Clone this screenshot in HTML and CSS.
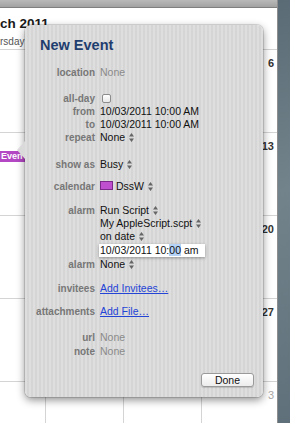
FILE: index.html
```html
<!DOCTYPE html>
<html lang="en">
<head>
    <meta charset="UTF-8">
    <meta name="viewport" content="width=device-width, initial-scale=1.0">
    <title>New Event</title>
    <link rel="stylesheet" href="styles.css">
</head>
<body>
    <div class="screen">
        <div class="calendar">
            <div class="toolbar"></div>
            <div class="month-head">
                <div class="month-title">ch 2011</div>
                <div class="day-name">rsday</div>
            </div>
            <div class="weeks">
                <div class="week">
                    <div class="day"></div>
                    <div class="day"></div>
                    <div class="day"></div>
                    <div class="day"><span class="num">6</span></div>
                </div>
                <div class="week">
                    <div class="day"><span class="chip">Even</span></div>
                    <div class="day"></div>
                    <div class="day"></div>
                    <div class="day"><span class="num">13</span></div>
                </div>
                <div class="week">
                    <div class="day"></div>
                    <div class="day"></div>
                    <div class="day"></div>
                    <div class="day"><span class="num">20</span></div>
                </div>
                <div class="week">
                    <div class="day"></div>
                    <div class="day"></div>
                    <div class="day"></div>
                    <div class="day"><span class="num">27</span></div>
                </div>
                <div class="week">
                    <div class="day"></div>
                    <div class="day"></div>
                    <div class="day"></div>
                    <div class="day"><span class="num next">3</span></div>
                </div>
            </div>
        </div>
        <div class="desktop"></div>
    </div>

    <div class="popover">
        <h1>New Event</h1>

        <div class="row">
            <span class="label">location</span>
            <span class="value muted">None</span>
        </div>

        <div class="row gap-13">
            <span class="label">all-day</span>
            <span class="value"><span class="checkbox"></span></span>
        </div>
        <div class="row">
            <span class="label">from</span>
            <span class="value">10/03/2011 10:00 AM</span>
        </div>
        <div class="row">
            <span class="label">to</span>
            <span class="value">10/03/2011 10:00 AM</span>
        </div>
        <div class="row">
            <span class="label">repeat</span>
            <span class="value">None <svg class="updown" width="5" height="9" viewBox="0 0 5 9"><path d="M2.5 0 5 3.5H0zM0 5.5h5L2.5 9z"/></svg></span>
        </div>

        <div class="row gap-14">
            <span class="label">show as</span>
            <span class="value">Busy <svg class="updown" width="5" height="9" viewBox="0 0 5 9"><path d="M2.5 0 5 3.5H0zM0 5.5h5L2.5 9z"/></svg></span>
        </div>

        <div class="row gap-9">
            <span class="label">calendar</span>
            <span class="value"><span class="swatch"></span>DssW <svg class="updown" width="5" height="9" viewBox="0 0 5 9"><path d="M2.5 0 5 3.5H0zM0 5.5h5L2.5 9z"/></svg></span>
        </div>

        <div class="row gap-11">
            <span class="label">alarm</span>
            <div class="value stack">
                <span>Run Script <svg class="updown" width="5" height="9" viewBox="0 0 5 9"><path d="M2.5 0 5 3.5H0zM0 5.5h5L2.5 9z"/></svg></span>
                <span>My AppleScript.scpt <svg class="updown" width="5" height="9" viewBox="0 0 5 9"><path d="M2.5 0 5 3.5H0zM0 5.5h5L2.5 9z"/></svg></span>
                <span>on date <svg class="updown" width="5" height="9" viewBox="0 0 5 9"><path d="M2.5 0 5 3.5H0zM0 5.5h5L2.5 9z"/></svg></span>
                <span class="date-field">10/03/2011 10:<span class="selected">00</span> am</span>
            </div>
        </div>
        <div class="row gap-1">
            <span class="label">alarm</span>
            <span class="value">None <svg class="updown" width="5" height="9" viewBox="0 0 5 9"><path d="M2.5 0 5 3.5H0zM0 5.5h5L2.5 9z"/></svg></span>
        </div>

        <div class="row gap-11">
            <span class="label">invitees</span>
            <span class="value"><a href="#">Add Invitees…</a></span>
        </div>

        <div class="row gap-10">
            <span class="label">attachments</span>
            <span class="value"><a href="#">Add File…</a></span>
        </div>

        <div class="row gap-13">
            <span class="label">url</span>
            <span class="value muted">None</span>
        </div>
        <div class="row gap-1">
            <span class="label">note</span>
            <span class="value muted">None</span>
        </div>

        <div class="actions">
            <button>Done</button>
        </div>
    </div>
</body>
</html>
```

FILE: styles.css
```css
body {
    margin: 0;
    width: 290px;
    height: 423px;
    overflow: hidden;
    font-family: 'Liberation Sans', Arial, sans-serif;
    background-color: #5f707a;
    position: relative;
}

.screen {
    display: flex;
    height: 423px;
}

.calendar {
    width: 277px;
    background-color: #fff;
    border-right: 1px solid #8e8e8e;
    overflow: hidden;
}

.desktop {
    flex: 1;
    background: linear-gradient(160deg, #5a6b75 0%, #73838c 45%, #5f707a 100%);
}

.toolbar {
    height: 7px;
    background: linear-gradient(#b9b9b9, #a2a2a2);
    border-bottom: 1px solid #7f7f7f;
}

.month-head {
    height: 41px;
}

.month-title {
    font-size: 13.5px;
    font-weight: bold;
    color: #1a1a1a;
    padding-top: 8px;
    line-height: 16px;
    white-space: nowrap;
}

.day-name {
    font-size: 10px;
    color: #555;
    padding-top: 4px;
    line-height: 12px;
    white-space: nowrap;
}

.weeks {
    border-top: 1px solid #d4d4d4;
}

.week {
    display: grid;
    grid-template-columns: 45px 78px 78px 1fr;
    height: 83px;
    border-bottom: 1px solid #d4d4d4;
    box-sizing: border-box;
}

.day {
    border-left: 1px solid #d4d4d4;
    text-align: right;
    padding: 3px 3px 0 0;
}

.day:first-child {
    border-left: none;
    text-align: left;
    padding: 12px 0 0 0;
}

.num {
    font-size: 11px;
    font-weight: bold;
    color: #333;
    line-height: 12px;
}

.num.next {
    color: #a8a8a8;
    font-weight: normal;
}

.chip {
    display: inline-block;
    background-color: #b347c4;
    color: #fff;
    font-size: 9px;
    font-weight: bold;
    line-height: 11px;
    padding: 0 3px 0 1px;
}

.popover {
    position: absolute;
    left: 25px;
    top: 25px;
    width: 238px;
    height: 372px;
    box-sizing: border-box;
    padding: 11px 9px 11px 0;
    border-radius: 6px;
    background: repeating-linear-gradient(90deg, #dedede 0, #dedede 2px, #d5d5d5 2px, #d5d5d5 4px);
    box-shadow: 0 3px 9px rgba(0, 0, 0, 0.45), 0 0 0 1px rgba(0, 0, 0, 0.12);
}

.popover::before {
    content: '';
    position: absolute;
    left: -8px;
    top: 116px;
    width: 8px;
    height: 18px;
    background-color: #dadada;
    clip-path: polygon(100% 0, 0 50%, 100% 100%);
}

h1 {
    margin: 0 0 12px 15px;
    font-size: 14.5px;
    line-height: 18px;
    color: #1f3d6e;
}

.row {
    display: grid;
    grid-template-columns: 70px 1fr;
    column-gap: 5px;
    line-height: 13px;
    font-size: 10.5px;
}

.gap-1 { margin-top: 1px; }
.gap-9 { margin-top: 9px; }
.gap-10 { margin-top: 10px; }
.gap-11 { margin-top: 11px; }
.gap-13 { margin-top: 13px; }
.gap-14 { margin-top: 14px; }

.label {
    text-align: right;
    font-size: 10px;
    font-weight: bold;
    color: #777;
}

.value {
    color: #111;
    white-space: nowrap;
}

.value.muted {
    color: #8a8a8a;
}

.stack {
    display: flex;
    flex-direction: column;
    align-items: flex-start;
}

.updown {
    fill: #666;
    vertical-align: -1px;
    margin-left: 1px;
}

.checkbox {
    display: inline-block;
    width: 7px;
    height: 7px;
    border: 1px solid #8c8c8c;
    border-radius: 2px;
    background: linear-gradient(#fff, #e8e8e8);
    margin: 0 0 0 2px;
    vertical-align: -1px;
}

.swatch {
    display: inline-block;
    width: 11px;
    height: 7px;
    background-color: #c04fd0;
    border: 1px solid #7c2a8a;
    margin-right: 3px;
    vertical-align: 0;
}

.date-field {
    margin-top: 1px;
    margin-left: -1px;
    padding: 0 3px 0 1px;
    width: 102px;
    line-height: 13px;
    background-color: #fff;
    box-shadow: 0 1px 3px rgba(0, 0, 0, 0.35);
}

.selected {
    background-color: #b5d3f7;
}

a {
    color: #2444d6;
    text-decoration: underline;
}

.actions {
    display: flex;
    justify-content: flex-end;
    margin-top: 15px;
}

button {
    width: 53px;
    height: 14px;
    padding: 0;
    font-family: 'Liberation Sans', Arial, sans-serif;
    font-size: 10.5px;
    line-height: 12px;
    color: #111;
    background: linear-gradient(#ffffff, #ececec);
    border: 1px solid #9a9a9a;
    border-radius: 3px;
    box-shadow: 0 1px 1px rgba(0, 0, 0, 0.15);
}
```
